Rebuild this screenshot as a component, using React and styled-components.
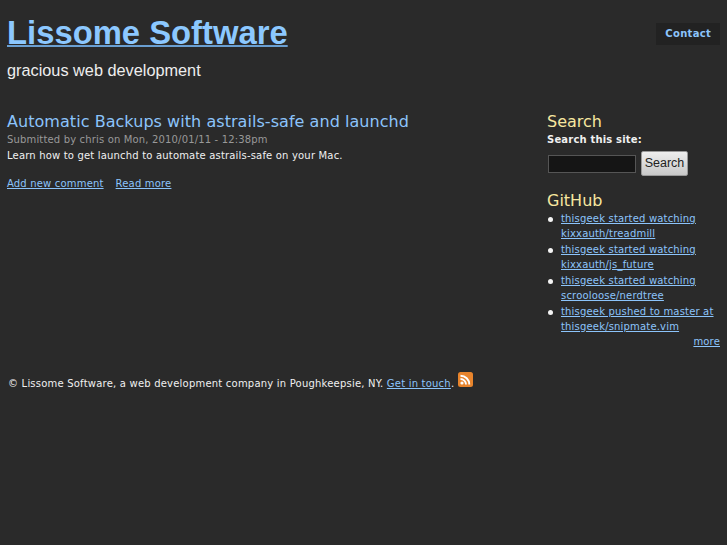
import React from "react";
import styled, { createGlobalStyle } from "styled-components";

const Global = createGlobalStyle`
  html, body { margin: 0; padding: 0; background: #2a2a2a; }
  body { font-family: "DejaVu Sans", sans-serif; font-size: 10px; line-height: 15.5px; letter-spacing: .18px; color: #f0f0f0; }
  a { color: #8cc4fb; text-decoration: underline; }
`;
const Page = styled.div`
  width: 727px; height: 545px; box-sizing: border-box; overflow: hidden;
  padding: 0 7px; display: flex; flex-direction: column;
`;
const Header = styled.header`
  display: flex; justify-content: space-between; align-items: flex-start; height: 113px; letter-spacing: 0;
`;
const Brand = styled.div`
  font-family: "Liberation Sans", Arial, sans-serif;
`;
const Title = styled.a`
  display: inline-block; margin-top: 14px; font-size: 32.8px; line-height: 37px; font-weight: 700; color: #8cc8ff;
  text-decoration-color: #6a9fd2; text-decoration-thickness: 1.5px;
`;
const Tagline = styled.div`
  margin-top: 9px; font-size: 16.3px; line-height: 20px; color: #eee;
`;
const Contact = styled.a`
  margin-top: 23px; height: 22px; line-height: 22px; padding: 0 9px; background: #222;
  font-weight: 700; font-size: 10px; text-decoration: none; letter-spacing: .3px;
`;
const Main = styled.main`
  display: flex; justify-content: space-between; height: 259px;
`;
const Article = styled.article`
  width: 520px;
`;
const ArticleTitle = styled.h2`
  margin: 0; font-size: 16px; line-height: 18px; font-weight: 400; letter-spacing: .05px;
  a { text-decoration: none; }
`;
const Meta = styled.div`
  color: #999; margin-top: 1px; letter-spacing: .16px;
`;
const Body = styled.p`
  margin: 0;
`;
const Links = styled.div`
  margin-top: 13px; display: flex; gap: 12px;
`;
const Side = styled.aside`
  width: 173px;
`;
const SideTitle = styled.h3`
  margin: 0; font-size: 16px; line-height: 18px; font-weight: 400; letter-spacing: 0; color: #f7e7a0;
`;
const Label = styled.div`
  font-weight: 700; margin-top: 1px;
`;
const SearchRow = styled.div`
  display: flex; align-items: flex-start; gap: 5px; margin: 3px 0 16px 1px;
`;
const Input = styled.input`
  width: 88px; height: 18px; margin-top: 4px; box-sizing: border-box; background: #151515; border: 1px solid #555; padding: 0;
`;
const Button = styled.button`
  width: 47px; height: 25px; padding: 0; font-family: "Liberation Sans", sans-serif; font-size: 12.5px;
  color: #222; background: linear-gradient(#eee, #c8c8c8); border: 1px solid #999; border-radius: 2px;
`;
const Feed = styled.ul`
  margin: 1px 0 0; padding: 0 0 0 14px; list-style: none;
`;
const FeedItem = styled.li`
  position: relative;
  &::before {
    content: ""; position: absolute; left: -13px; top: 6px;
    width: 5px; height: 5px; border-radius: 50%; background: #f4f4f4;
  }
`;
const More = styled.div`
  text-align: right; margin-top: -1px;
`;
const Footer = styled.footer`
  display: flex; align-items: flex-start; gap: 4px; padding-left: 1px; letter-spacing: .21px;
`;
const FooterText = styled.span`
  margin-top: 4px;
`;
const Rss = () => (
  <svg width="15" height="15" viewBox="0 0 15 15">
    <rect width="15" height="15" rx="2.5" fill="#e8842c" />
    <circle cx="4" cy="11" r="1.6" fill="#fff" />
    <path d="M2.5 7a5.5 5.5 0 0 1 5.5 5.5M2.5 3.7a8.8 8.8 0 0 1 8.8 8.8" fill="none" stroke="#fff" strokeWidth="1.9" />
  </svg>
);
const feed = [
  ["thisgeek started watching", "kixxauth/treadmill"],
  ["thisgeek started watching", "kixxauth/js_future"],
  ["thisgeek started watching", "scrooloose/nerdtree"],
  ["thisgeek pushed to master at", "thisgeek/snipmate.vim"],
];
export default function App() {
  return (
    <Page>
      <Global />
      <Header>
        <Brand>
          <Title href="#">Lissome Software</Title>
          <Tagline>gracious web development</Tagline>
        </Brand>
        <Contact href="#">Contact</Contact>
      </Header>
      <Main>
        <Article>
          <ArticleTitle><a href="#">Automatic Backups with astrails-safe and launchd</a></ArticleTitle>
          <Meta>Submitted by chris on Mon, 2010/01/11 - 12:38pm</Meta>
          <Body>Learn how to get launchd to automate astrails-safe on your Mac.</Body>
          <Links><a href="#">Add new comment</a><a href="#">Read more</a></Links>
        </Article>
        <Side>
          <SideTitle>Search</SideTitle>
          <Label>Search this site:</Label>
          <SearchRow><Input /><Button>Search</Button></SearchRow>
          <SideTitle>GitHub</SideTitle>
          <Feed>
            {feed.map(([a, b], i) => (
              <FeedItem key={i}><a href="#">{a}<br />{b}</a></FeedItem>
            ))}
          </Feed>
          <More><a href="#">more</a></More>
        </Side>
      </Main>
      <Footer>
        <FooterText>© Lissome Software, a web development company in Poughkeepsie, NY. <a href="#">Get in touch</a>.</FooterText>
        <Rss />
      </Footer>
    </Page>
  );
}
